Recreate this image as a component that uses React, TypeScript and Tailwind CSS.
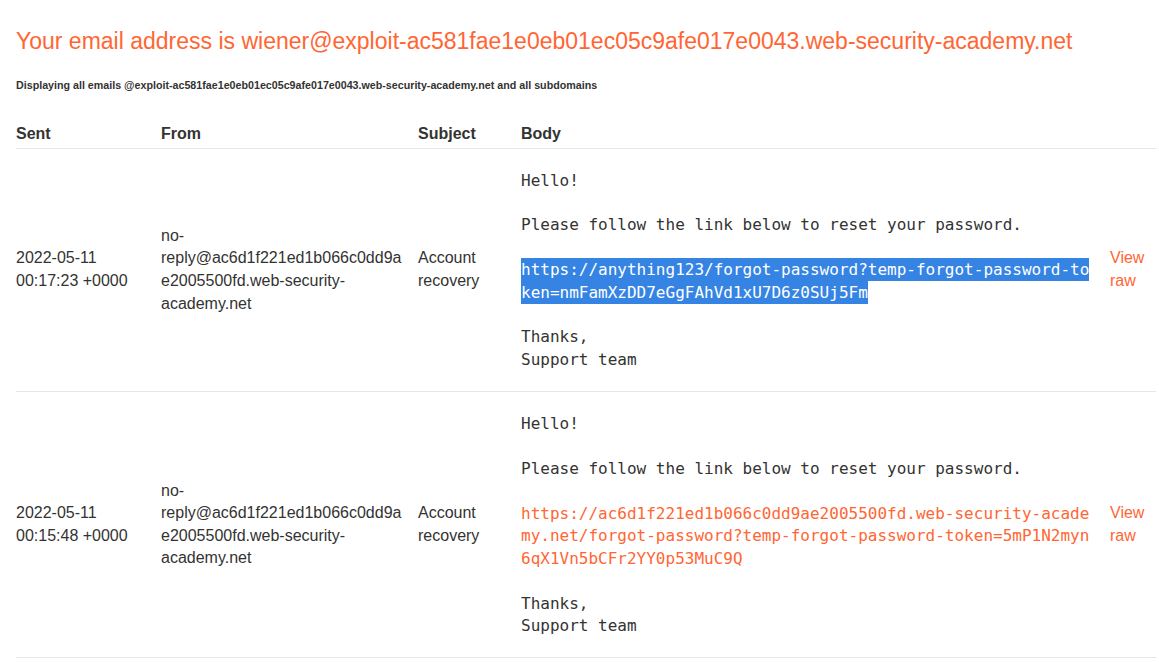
const sans = "font-['Liberation_Sans',Arial,sans-serif]";
const mono = "font-['DejaVu_Sans_Mono','Liberation_Mono',monospace]";

type Email = {
  date: string;
  time: string;
  from: string;
  subject: string;
  link: string;
  selected?: boolean;
};

const emails: Email[] = [
  {
    date: "2022-05-11",
    time: "00:17:23 +0000",
    from: "no-reply@ac6d1f221ed1b066c0dd9ae2005500fd.web-security-academy.net",
    subject: "Account recovery",
    link: "https://anything123/forgot-password?temp-forgot-password-token=nmFamXzDD7eGgFAhVd1xU7D6z0SUj5Fm",
    selected: true,
  },
  {
    date: "2022-05-11",
    time: "00:15:48 +0000",
    from: "no-reply@ac6d1f221ed1b066c0dd9ae2005500fd.web-security-academy.net",
    subject: "Account recovery",
    link: "https://ac6d1f221ed1b066c0dd9ae2005500fd.web-security-academy.net/forgot-password?temp-forgot-password-token=5mP1N2myn6qX1Vn5bCFr2YY0p53MuC9Q",
  },
];

function EmailRow({ email }: { email: Email }) {
  return (
    <tr className="border-b border-[#e6e6e6] align-middle">
      <td className="pr-3">
        {email.date} {email.time}
      </td>
      <td className="pr-3 [overflow-wrap:anywhere]">{email.from}</td>
      <td className="pr-3">{email.subject}</td>
      <td className="pt-[21px] pb-[20px]">
        <div className={`${mono} w-[572px] whitespace-pre-wrap break-all leading-[22.4px]`}>
          {"Hello!\n\nPlease follow the link below to reset your password.\n\n"}
          {email.selected ? (
            <span className="bg-[#3584e4] py-[2px] text-white">{email.link}</span>
          ) : (
            <span className="text-[#ff6633]">{email.link}</span>
          )}
          {"\n\nThanks,\nSupport team"}
        </div>
      </td>
      <td className="text-[#ff6633]">View raw</td>
    </tr>
  );
}

export default function App() {
  return (
    <div className={`${sans} min-h-screen bg-white pl-4 pr-[3px] text-[#333332]`}>
      <h1 className="pt-[24px] text-[23px] leading-[34px] text-[#ff6633]">
        Your email address is wiener@exploit-ac581fae1e0eb01ec05c9afe017e0043.web-security-academy.net
      </h1>
      <p className="mt-[20px] text-[10.7px] font-bold leading-[14px]">
        Displaying all emails @exploit-ac581fae1e0eb01ec05c9afe017e0043.web-security-academy.net and all subdomains
      </p>
      <table className="mt-[31px] w-[1140px] table-fixed border-collapse text-[16px] leading-[22.6px]">
        <colgroup>
          <col className="w-[145px]" />
          <col className="w-[257px]" />
          <col className="w-[103px]" />
          <col className="w-[589px]" />
          <col className="w-[46px]" />
        </colgroup>
        <thead>
          <tr className="border-b border-[#e6e6e6] text-left">
            <th className="pb-[2px] font-bold">Sent</th>
            <th className="pb-[2px] font-bold">From</th>
            <th className="pb-[2px] font-bold">Subject</th>
            <th className="pb-[2px] font-bold">Body</th>
            <th />
          </tr>
        </thead>
        <tbody>
          {emails.map((e) => (
            <EmailRow key={e.time} email={e} />
          ))}
        </tbody>
      </table>
    </div>
  );
}
